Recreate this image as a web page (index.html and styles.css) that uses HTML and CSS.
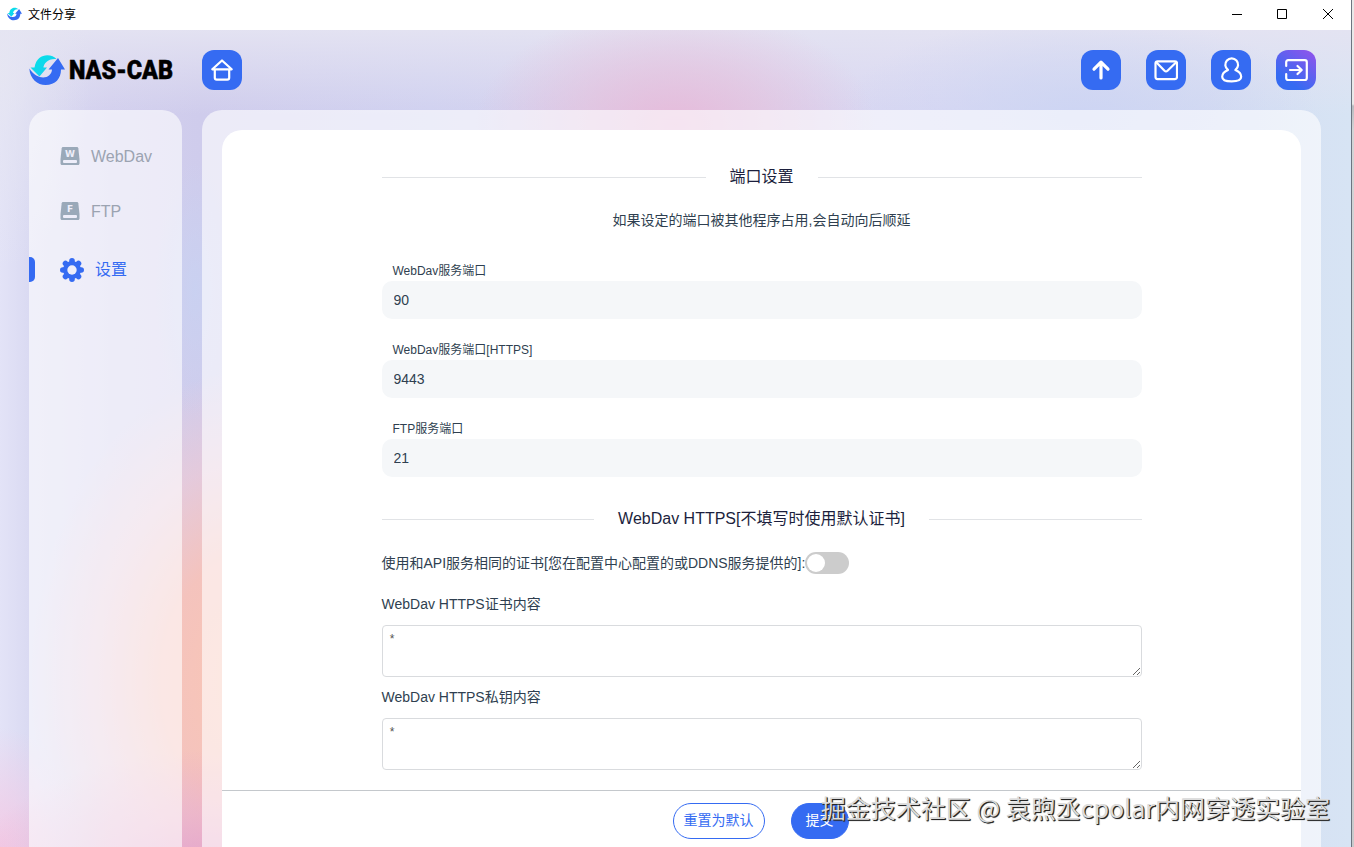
FILE: index.html
```html
<!DOCTYPE html>
<html lang="zh-CN">
<head>
	<meta charset="UTF-8">
	<title>文件分享</title>
	<link rel="stylesheet" href="styles.css">
</head>
<body>
	<svg class="defs" width="0" height="0">
		<defs>
			<linearGradient id="cyan" x1="0" y1="0" x2="1" y2="1">
				<stop offset="0" stop-color="#00e5e6"/>
				<stop offset="1" stop-color="#1fc8f2"/>
			</linearGradient>
			<symbol id="logo" viewBox="0 0 36 32">
				<path fill="url(#cyan)" d="M27.500 5C23-.5 8-2 5.500 13.500H1.500l9 9 7.500-9h-3.500c0-4 5-9.500 13-8.500z"/>
				<path fill="#356bf2" d="M.3 14.500C1 25 8.500 31 16.500 31c10 0 15.500-6.500 15.500-15.500h4L29 4l-9.500 11.500h3.500C22.500 24 10 28.500.3 14.500z"/>
			</symbol>
		</defs>
	</svg>
	<div class="window">
		<div class="titlebar">
			<svg class="appIcon" width="15" height="14"><use href="#logo"/></svg>
			<span class="appName">文件分享</span>
			<div class="winBtns">
				<svg width="10" height="10" viewBox="0 0 10 10"><path d="M0 5.500h10"/></svg>
				<svg width="10" height="10" viewBox="0 0 10 10"><path d="M.5.5h9v9h-9z"/></svg>
				<svg width="10" height="10" viewBox="0 0 10 10"><path d="M0 0l10 10M10 0L0 10"/></svg>
			</div>
		</div>
		<div class="page">
			<div class="header">
				<svg class="logo" width="150" height="40" viewBox="0 0 150 40">
					<use href="#logo" y="4" width="36" height="32"/>
					<text x="40" y="29" textLength="104" lengthAdjust="spacingAndGlyphs">NAS-CAB</text>
				</svg>
				<a class="iconBtn home" href="javascript:;">
					<svg width="24" height="24" viewBox="0 0 24 24"><path d="M2.300 11.300L12 2.500l9.700 8.800H2.300zM4.800 11.500v8.200c0 1.200.7 1.900 1.900 1.900h10.600c1.200 0 1.900-.7 1.900-1.900v-8.200"/></svg>
				</a>
				<div class="tools">
					<a class="iconBtn" href="javascript:;">
						<svg class="bold" width="24" height="24" viewBox="0 0 24 24"><path d="M12 20V5M5 11.200L12 4.200l7 7"/></svg>
					</a>
					<a class="iconBtn" href="javascript:;">
						<svg width="24" height="24" viewBox="0 0 24 24"><rect x="1.500" y="3.300" width="21.500" height="17.800" rx="2"/><path d="M2.500 4.500l8 8.300c1 .9 2 .9 3 0L22 4.500"/></svg>
					</a>
					<a class="iconBtn" href="javascript:;">
						<svg width="24" height="26" viewBox="0 0 24 26"><path d="M9 13a6.400 6.400 0 1 1 7.400 0c3.500 1.500 5.800 4 5.800 6.800 0 3-2.400 4.600-9.500 4.600s-9.500-1.600-9.500-4.600c0-2.800 2.300-5.300 5.800-6.800z"/></svg>
					</a>
					<a class="iconBtn exit" href="javascript:;">
						<svg width="24" height="24" viewBox="0 0 24 24"><path d="M2.200 8V4.200c0-1.300.7-2 2-2h16.600c1.300 0 2 .7 2 2v15.800c0 1.300-.7 2-2 2H4.200c-1.300 0-2-.7-2-2V16M6 12h11.500M13.500 8l4.200 4-4.200 4"/></svg>
					</a>
				</div>
			</div>
			<div class="content">
				<ul class="sidebar">
					<li>
						<svg width="20" height="18" viewBox="0 0 20 18">
							<path fill="#9aa9b9" d="M3.200 0h13.600c.8 0 1.300.5 1.500 1.300L19.500 12v4.500c0 .9-.6 1.500-1.500 1.500H2C1.100 18 .5 17.400.5 16.500V12L1.700 1.300C1.900.5 2.400 0 3.200 0z"/>
							<rect x="3" y="13" width="14" height="3" rx="1" fill="#eeeefa"/>
							<text x="10" y="9.500">W</text>
						</svg>
						<span>WebDav</span>
					</li>
					<li>
						<svg width="20" height="18" viewBox="0 0 20 18">
							<path fill="#9aa9b9" d="M3.200 0h13.600c.8 0 1.300.5 1.500 1.300L19.500 12v4.500c0 .9-.6 1.500-1.500 1.500H2C1.100 18 .5 17.400.5 16.500V12L1.700 1.300C1.900.5 2.400 0 3.200 0z"/>
							<rect x="3" y="13" width="14" height="3" rx="1" fill="#eeeefa"/>
							<text x="10" y="9.500">F</text>
						</svg>
						<span>FTP</span>
					</li>
					<li class="cur">
						<svg width="24" height="24" viewBox="0 0 24 24">
							<g stroke="#356bf2" stroke-width="5.600" stroke-linecap="round">
								<path d="M12 2.800v18.400M2.800 12h18.400M5.500 5.500l13 13M18.500 5.500l-13 13"/>
							</g>
							<circle cx="12" cy="12" r="9" fill="#356bf2"/>
							<circle cx="12" cy="12" r="4.700" fill="#eeeefa"/>
						</svg>
						<span>设置</span>
					</li>
				</ul>
				<div class="main">
					<div class="panel">
						<div class="form">
							<div class="divider"><span>端口设置</span></div>
							<p class="tip">如果设定的端口被其他程序占用,会自动向后顺延</p>
							<div class="item">
								<label for="davPort">WebDav服务端口</label>
								<input type="text" id="davPort" value="90">
							</div>
							<div class="item">
								<label for="davsPort">WebDav服务端口[HTTPS]</label>
								<input type="text" id="davsPort" value="9443">
							</div>
							<div class="item">
								<label for="ftpPort">FTP服务端口</label>
								<input type="text" id="ftpPort" value="21">
							</div>
							<div class="divider https"><span>WebDav HTTPS[不填写时使用默认证书]</span></div>
							<div class="switchRow">
								<span>使用和API服务相同的证书[您在配置中心配置的或DDNS服务提供的]:</span>
								<span class="switch"></span>
							</div>
							<label class="areaName" for="cert">WebDav HTTPS证书内容</label>
							<textarea id="cert">*</textarea>
							<label class="areaName" for="key">WebDav HTTPS私钥内容</label>
							<textarea id="key">*</textarea>
						</div>
						<div class="footer">
							<a class="btn" href="javascript:;">重置为默认</a>
							<a class="btn primary" href="javascript:;">提交</a>
						</div>
					</div>
				</div>
			</div>
		</div>
	</div>
	<div class="watermark">掘金技术社区 @ 袁煦丞cpolar内网穿透实验室</div>
</body>
</html>
```
FILE: styles.css
```css
*{
	margin: 0;
	padding: 0;
	box-sizing: border-box;
}
body{
	height: 847px;
	overflow: hidden;
	background: linear-gradient(#e9e9e9 0, #e9e9e9 104px, #b9bcc0 106px, #d3d4d6 130px, #c9cacc 100%);
	font: 14px/20px "Liberation Sans", "Noto Sans CJK SC", sans-serif;
	color: #2f3f50;
}
a{
	text-decoration: none;
}
ul{
	list-style: none;
}
.defs{
	position: absolute;
}
.window{
	display: flex;
	flex-direction: column;
	width: 1352px;
	height: 847px;
	border-right: 1px solid #6d7580;
}
/* 标题栏 */
.titlebar{
	display: flex;
	align-items: center;
	height: 30px;
	padding: 0 18px 2px 7px;
	background: #fff;
}
.appName{
	margin-left: 6px;
	padding-top: 2px;
	font-size: 12px;
	color: #000;
}
.winBtns{
	display: flex;
	gap: 35px;
	margin-left: auto;
}
.winBtns svg{
	fill: none;
	stroke: #000;
}
.winBtns svg:last-child{
	margin-left: 1px;
}
/* 背景 */
.page{
	flex: 1;
	display: flex;
	flex-direction: column;
	min-height: 0;
	background:
		radial-gradient(ellipse 200px 120px at 675px 95px, rgba(232,184,216,.9), rgba(230,192,220,.65) 45%, rgba(228,208,230,0)),
		radial-gradient(ellipse 240px 100px at 1080px 85px, rgba(204,212,243,.9), rgba(204,212,243,0)),
		radial-gradient(ellipse 240px 130px at 210px 850px, rgba(228,156,200,.9), rgba(234,170,204,.55) 50%, rgba(236,180,210,0)),
		radial-gradient(ellipse 80px 120px at 0 817px, rgba(244,200,228,.9), rgba(246,200,228,0)),
		radial-gradient(ellipse 220px 310px at 250px 650px, rgba(250,198,180,1) 0, rgba(248,194,184,.9) 40%, rgba(246,200,206,.55) 70%, rgba(244,205,215,0)),
		radial-gradient(ellipse 90px 200px at 0 40px, rgba(230,230,242,.8), rgba(226,226,242,0)),
		radial-gradient(ellipse 40px 130px at 195px 260px, rgba(200,210,242,.8), rgba(200,210,242,0)),
		linear-gradient(rgba(228,227,242,.95), rgba(228,227,242,0) 85px),
		linear-gradient(90deg, #e3e3f7 0, #dadaf2 29px, #d3d0ee 110px, #cfccec 200px, #d0d1f0 430px, #d5d2ee 600px, #d9d8f3 950px, #d4dcf2 1200px, #d7e4f4 100%);
}
/* 顶部 */
.header{
	display: flex;
	align-items: center;
	height: 80px;
	padding: 0 35px 0 29px;
}
.logo text{
	font: 900 26px Roboto, "Liberation Sans", sans-serif;
	fill: #000;
	stroke: #000;
	stroke-width: .5;
}
.iconBtn{
	display: flex;
	align-items: center;
	justify-content: center;
	width: 40px;
	height: 40px;
	border-radius: 12px;
	background: #356bf2;
}
.iconBtn svg{
	fill: none;
	stroke: #fff;
	stroke-width: 2.2;
	stroke-linecap: round;
	stroke-linejoin: round;
}
.iconBtn svg.bold{
	stroke-width: 3.2;
}
.home{
	margin-left: 23px;
}
.tools{
	display: flex;
	gap: 25px;
	margin-left: auto;
}
.exit{
	background: linear-gradient(215deg, #8b55ec 8%, #356bf2 75%);
}
.content{
	flex: 1;
	display: flex;
	gap: 20px;
	min-height: 0;
	padding: 0 30px 0 29px;
}
/* 左侧菜单 */
.sidebar{
	width: 153px;
	padding-top: 31px;
	border-radius: 20px 20px 0 0;
	background: rgba(255,255,255,.6);
}
.sidebar li{
	display: flex;
	align-items: center;
	height: 30px;
	margin-bottom: 25px;
	padding-left: 31px;
	font-size: 16px;
	color: #9ba3b1;
}
.sidebar li span{
	margin-left: 11px;
	padding-top: 1px;
}
.sidebar text{
	font: bold 9px "DejaVu Sans", sans-serif;
	fill: #eeeefa;
	text-anchor: middle;
}
.sidebar .cur{
	height: 37px;
	color: #356bf2;
}
.sidebar .cur:before{
	content: "";
	width: 6px;
	height: 25px;
	margin-left: -31px;
	margin-right: 25px;
	border-radius: 0 5px 5px 0;
	background: #356bf2;
}
/* 右侧 */
.main{
	flex: 1;
	padding: 20px 20px 0;
	border-radius: 20px 20px 0 0;
	background: rgba(255,255,255,.6);
}
.panel{
	display: flex;
	flex-direction: column;
	height: 100%;
	border-radius: 20px 20px 0 0;
	background: #fff;
}
.form{
	flex: 1;
	width: 760px;
	margin: 0 auto;
	padding-top: 35px;
}
.divider{
	display: flex;
	align-items: center;
	gap: 24px;
	height: 24px;
	font-size: 16px;
	color: #1c1f3d;
}
.divider:before,
.divider:after{
	content: "";
	flex: 1;
	height: 1px;
	background: #e1e3e6;
}
.tip{
	margin: 21px 0 30px;
	text-align: center;
}
.item{
	margin-bottom: 20px;
}
.item label{
	display: block;
	height: 21px;
	padding: 1px 0 0 11px;
	font-size: 12px;
}
.item input{
	display: block;
	width: 100%;
	height: 38px;
	padding: 0 12px;
	border: 0;
	border-radius: 10px;
	background: #f5f7f9;
	font: inherit;
	color: inherit;
}
.https{
	margin-top: 30px;
}
.switchRow{
	display: flex;
	align-items: center;
	height: 22px;
	margin: 21px 0 20px;
}
.switch{
	width: 44px;
	height: 22px;
	padding: 2px;
	border-radius: 11px;
	background: #ccc;
}
.switch:before{
	content: "";
	display: block;
	width: 18px;
	height: 18px;
	border-radius: 50%;
	background: #fff;
}
.areaName{
	display: block;
	margin-bottom: 11px;
}
textarea{
	display: block;
	width: 760px;
	height: 52px;
	margin-bottom: 10px;
	padding: 7px 6px;
	border: 1px solid #d9dbde;
	border-radius: 4px;
	font: 12px/15px "Liberation Mono", monospace;
	color: #555;
}
.footer{
	display: flex;
	justify-content: center;
	gap: 26px;
	height: 57px;
	padding: 12px 2px 0 0;
	border-top: 1px solid #c4c8cc;
}
.btn{
	height: 36px;
	padding: 0 10px;
	border: 1px solid #356bf2;
	border-radius: 18px;
	line-height: 33px;
	color: #356bf2;
}
.primary{
	padding: 0 14px;
	background: #356bf2;
	color: #fff;
}
.watermark{
	position: absolute;
	right: 24px;
	bottom: 22px;
	font: 25px/36px "Noto Sans CJK SC", sans-serif;
	color: #dcdcdc;
	text-shadow: 1px 1px 1px #222, 1px 1px 0 #444;
	white-space: nowrap;
}
```
